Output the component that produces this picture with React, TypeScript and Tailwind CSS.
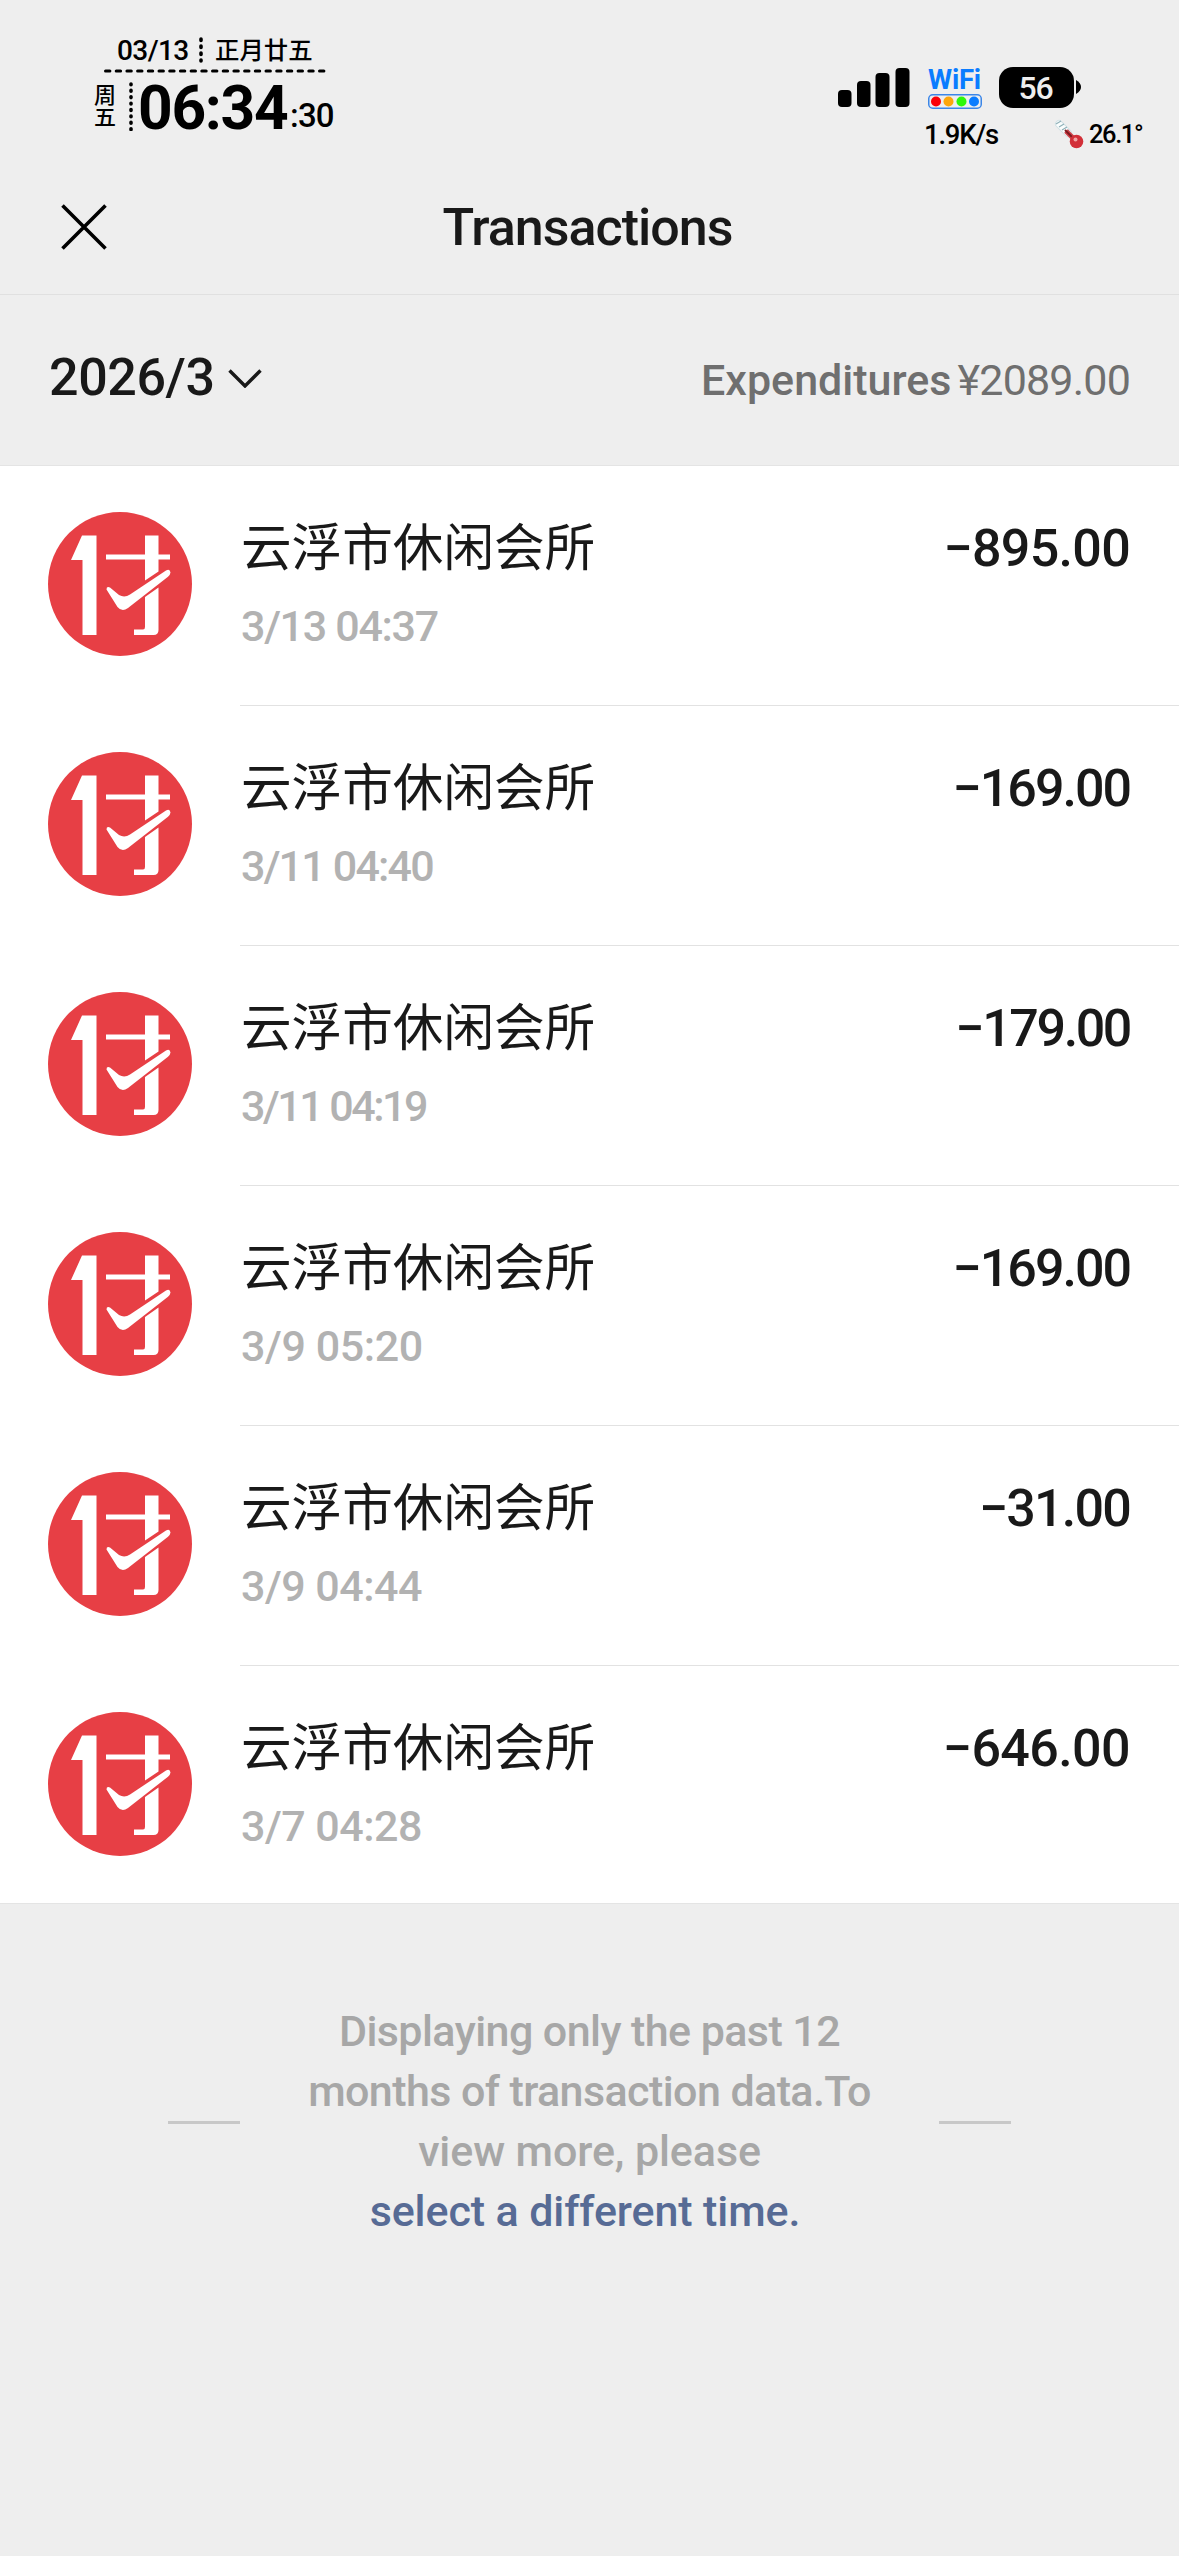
const transactions = [
  { date: '3/13 04:37', amount: '895.00', dateTracking: 'tracking-[-1.3px]', amountTracking: 'tracking-[-0.7px]' },
  { date: '3/11 04:40', amount: '169.00', dateTracking: 'tracking-[-1.8px]', amountTracking: 'tracking-[-2px]' },
  { date: '3/11 04:19', amount: '179.00', dateTracking: 'tracking-[-2.5px]', amountTracking: 'tracking-[-2.4px]' },
  { date: '3/9 05:20', amount: '169.00', dateTracking: 'tracking-[-0.4px]', amountTracking: 'tracking-[-2px]' },
  { date: '3/9 04:44', amount: '31.00', dateTracking: 'tracking-[-0.5px]', amountTracking: 'tracking-[-1.8px]' },
  { date: '3/7 04:28', amount: '646.00', dateTracking: 'tracking-[-0.5px]', amountTracking: 'tracking-[-0.6px]' },
]

const Clock = () => {
  return (
    <div className="w-[250px] text-black font-medium">
      <div className="flex items-center h-[30px] pl-[23px]">
        <span className="w-[70px] pt-[2px] text-[28px] leading-none tracking-[-0.6px]">03/13</span>
        <svg className="w-[4px] h-[26px] mx-[12px]" viewBox="0 0 4 26">
          <path d="M2 2v22" stroke="black" strokeWidth={3.6} strokeLinecap="round" strokeDasharray="1.4 5.6" />
        </svg>
        <span className="pt-[2px] text-[24.4px] leading-none">正月廿五</span>
      </div>
      <svg className="w-[222px] h-[4px] ml-[10px] mt-[4px]" viewBox="0 0 222 4">
        <path d="M1.5 2h219" stroke="black" strokeWidth={3} strokeLinecap="round" strokeDasharray="4.4 6.3" />
      </svg>
      <div className="flex items-start mt-[9px] h-[50px]">
        <div className="w-[22px] flex flex-col text-[22px] leading-[22px] pt-[3px]">
          <span>周</span>
          <span>五</span>
        </div>
        <svg className="w-[4px] h-[49px] ml-[13px]" viewBox="0 0 4 49">
          <path d="M2 2v46" stroke="black" strokeWidth={3.6} strokeLinecap="round" strokeDasharray="0.8 5.6" />
        </svg>
        <span className="ml-[5px] w-[152px] text-[60.500px] leading-[54px] font-bold tracking-[-1.3px]">06:34</span>
        <span className="text-[33px] leading-[67px] tracking-[-0.8px]">:30</span>
      </div>
    </div>
  )
}

const SystemIcons = () => {
  return (
    <div className="w-[310px] text-black font-medium">
      <div className="flex items-start h-[42px]">
        <svg className="w-[72px] h-[40px] mt-[1px]" viewBox="0 0 72 40">
          <rect x="0" y="22" width="13.5" height="17" rx="4" />
          <rect x="19" y="13" width="13.5" height="26" rx="4" />
          <rect x="37.500" y="5" width="14" height="34" rx="4" />
          <rect x="57.500" y="0" width="14" height="39" rx="4" />
        </svg>
        <div className="ml-[17px] w-[55px] flex flex-col items-center">
          <span className="h-[24px] text-[27.500px] leading-[26px] font-bold text-[#0a7cff] tracking-[-0.2px]">WiFi</span>
          <svg className="w-[54px] h-[15px] mt-[3px]" viewBox="0 0 54 15">
            <rect x="0.75" y="0.75" width="52.5" height="13.500" rx="4" fill="#eeeeee" stroke="#3b86e8" strokeWidth={1.5} />
            <circle cx="8" cy="7.500" r="5" fill="#fb0007" />
            <circle cx="20.500" cy="7.500" r="5" fill="#fda60b" />
            <circle cx="33.500" cy="7.500" r="5" fill="#2df80a" />
            <circle cx="46" cy="7.500" r="5" fill="#0a7cff" />
          </svg>
        </div>
        <div className="ml-[17px] w-[75px] h-[41px] pr-[2px] rounded-[14px] bg-black text-[#eee] text-[32px] leading-[43px] text-center tracking-[-1.2px]">56</div>
        <svg className="w-[5px] h-[14px] ml-[2px] mt-[13px]" viewBox="0 0 5 14">
          <path d="M0 0Q5 3 5 7Q5 11 0 14Z" />
        </svg>
      </div>
      <div className="flex items-center h-[40px] pl-[86px] mt-[6px]">
        <span className="w-[76px] text-[27.500px] leading-none tracking-[-1.2px]">1.9K/s</span>
        <svg className="w-[32px] h-[32px] ml-[54px]" viewBox="0 0 32 32">
          <path d="M5 5L14 14" stroke="#d3e2e6" strokeWidth={8} strokeLinecap="round" />
          <path d="M5 5L14 14" stroke="#fafdfd" strokeWidth={6} strokeLinecap="round" />
          <path d="M2 5l5-3M5 8l5-3M8 11l5-3M11 14l4-3" stroke="#8fb0b8" strokeWidth={1.2} />
          <path d="M12 12l9 9" stroke="#cf4148" strokeWidth={5} />
          <path d="M11 11l7 7" stroke="#7d1a20" strokeWidth={2} />
          <circle cx="22.500" cy="22.500" r="6.8" fill="#d22f38" />
          <circle cx="21.500" cy="20.500" r="2" fill="#f0a3a4" />
        </svg>
        <span className="ml-[3px] text-[25.500px] leading-none tracking-[-1.4px]">26.1°</span>
      </div>
    </div>
  )
}

const MerchantLogo = () => {
  return (
    <svg className="w-[144px] h-[144px] shrink-0" viewBox="0 0 144 144">
      <circle cx="72" cy="72" r="72" fill="#e73f45" />
      <g fill="white">
        <path d="M34 23.500H48.500V123H34.500V48H23Z" />
        <path d="M97 23.500h13.500v19H122v5H110.500v12L97 68.500v-21H58v-5H97z" />
        <path d="M97 85l13.500-9.500V118q0 5-5 5H86v-5.500h9q2 0 2-2.500z" />
        <path d="M58.500 77.500q0-3.500 3.500-2l9 7.500q5.500 3 11-.5L118 58.500q4-2 4.500 2-.3 2.500-2.500 4.200L80 96q-6 4.500-10.500-1z" />
      </g>
    </svg>
  )
}

const TransactionRow = ({ date, amount, dateTracking, amountTracking }: (typeof transactions)[number]) => {
  return (
    <li className="group flex h-[240px] last:h-[237px] pl-[48px]">
      <div className="pt-[46px]">
        <MerchantLogo />
      </div>
      <div className="flex flex-1 justify-between ml-[48px] pl-[1px] pr-[49px] pt-[53px] border-b border-[#e2e2e2] group-last:border-b-0">
        <div>
          <p className="text-[50.600px] leading-[60px] text-[#191919]">云浮市休闲会所</p>
          <p className={`mt-[17px] text-[43px] leading-[60px] font-medium text-[#b2b2b2] ${dateTracking}`}>{date}</p>
        </div>
        <span className={`text-[52px] leading-[60px] font-medium text-[#191919] ${amountTracking}`}>−{amount}</span>
      </div>
    </li>
  )
}

export default function App() {
  return (
    <div className="w-[1179px] h-[2556px] overflow-hidden bg-[#eeeeee] font-['Roboto','Noto_Sans_CJK_SC',sans-serif]">
      <header className="h-[295px] border-b border-[#e0e0e0]">
        <div className="flex justify-between h-[162px] pl-[94px] pr-[31px]">
          <div className="pt-[35px]">
            <Clock />
          </div>
          <div className="pt-[67px]">
            <SystemIcons />
          </div>
        </div>
        <div className="grid grid-cols-[1fr_auto_1fr] items-center h-[132px] pb-[2px]">
          <svg className="w-[46px] h-[46px] ml-[61px]" viewBox="0 0 46 46" fill="none" stroke="black" strokeWidth={3.6}>
            <path d="M1.500 1.500l43 43M44.500 1.500l-43 43" />
          </svg>
          <h1 className="pt-[2px] pr-[4px] text-[52px] leading-none font-medium text-[#191919] tracking-[-1px]">Transactions</h1>
        </div>
      </header>

      <section className="flex items-center justify-between h-[171px] pl-[49px] pr-[49px] border-b border-[#e4e4e4]">
        <div className="flex items-center pb-[4px] text-[#191919]">
          <span className="text-[52px] leading-none font-medium tracking-[-0.4px]">2026/3</span>
          <svg className="w-[34px] h-[19px] ml-[13px]" viewBox="0 0 34 19" fill="none" stroke="currentColor" strokeWidth={3.4}>
            <path d="M1.500 1.500L17 17L32.500 1.500" />
          </svg>
        </div>
        <div className="text-[43px] leading-none text-[#6f6f6f]">
          <span className="font-medium">Expenditures</span>
          <span className="ml-[6px] tracking-[-0.8px]">¥2089.00</span>
        </div>
      </section>

      <ul className="bg-white border-b border-[#e4e4e4]">
        {transactions.map((item) => (
          <TransactionRow key={item.date} {...item} />
        ))}
      </ul>

      <footer className="flex items-center justify-between mt-[97px] px-[168px] text-center text-[43px] leading-[60px] font-medium text-[#a7a7a7]">
        <span className="w-[72px] h-[3px] mt-[3px] bg-[#c8c8c8]" />
        <p>
          <span className="tracking-[-0.57px]">Displaying only the past 12</span>
          <br />
          <span className="tracking-[-0.58px]">months of transaction data.To</span>
          <br />
          <span className="tracking-[-0.1px]">view more, please</span>
          <br />
          <a className="pr-[9px] tracking-[-0.1px] text-[#576b95]">select a different time.</a>
        </p>
        <span className="w-[72px] h-[3px] mt-[3px] bg-[#c8c8c8]" />
      </footer>
    </div>
  )
}
